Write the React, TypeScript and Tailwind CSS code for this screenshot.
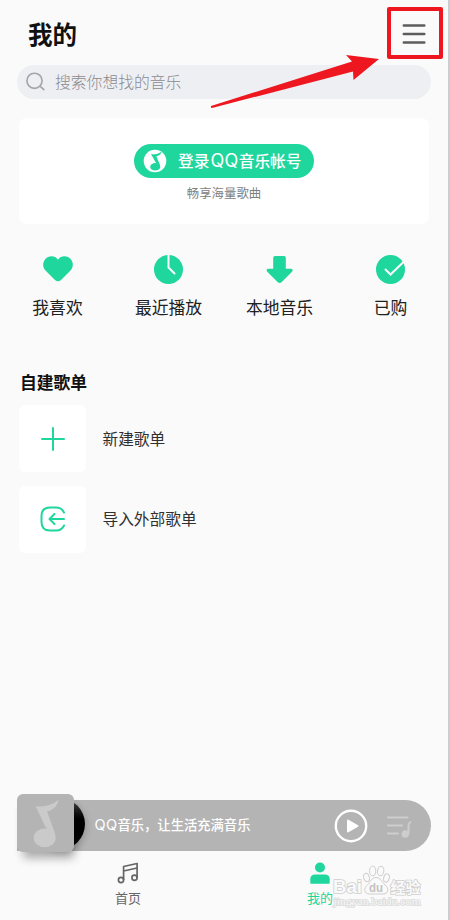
import type { ReactNode } from 'react'

// QQ Music note, drawn on a 57x58 grid
const Note = () => (
  <>
    <path d="M18.500 12c8 1.800 16-.8 23-6-1.300 6.500-5.500 10.300-11.500 11.500l8.300 22.500-4 1.500L28 32z" />
    <ellipse cx="27.700" cy="43.800" rx="11" ry="9.300" />
  </>
)

const Shortcut = ({ label, children }: { label: string; children: ReactNode }) => (
  <div className="flex w-[111px] flex-col items-center">
    <svg viewBox="0 0 32 32" className="h-8 w-8 text-[#1fd69d]">{children}</svg>
    <span className="mt-[10px] text-[16.8px] leading-6 text-[#202020] whitespace-nowrap">{label}</span>
  </div>
)

const PlaylistRow = ({ label, children }: { label: string; children: ReactNode }) => (
  <div className="flex h-[67px] items-center">
    <div className="flex h-[67px] w-[67px] items-center justify-center rounded-md bg-white">
      <svg viewBox="0 0 28 28" className="h-7 w-7" fill="none" stroke="#1fd69d" strokeWidth="2" strokeLinecap="round" strokeLinejoin="round">
        {children}
      </svg>
    </div>
    <span className="ml-[16.5px] text-[15.7px] leading-6 text-[#303030]">{label}</span>
  </div>
)

const Watermark = () => (
  <svg viewBox="0 0 100 52" className="absolute left-[330px] top-[863px] h-[52px] w-[100px] font-['Liberation_Sans',sans-serif]" fill="#fafafa" stroke="#cfcfcf" strokeWidth="1">
    <text x="3" y="30" fontSize="18.500" fontWeight="700" textLength="29" lengthAdjust="spacingAndGlyphs" strokeWidth="1.600" paintOrder="stroke">Bai</text>
    <ellipse cx="36.500" cy="14.500" rx="2.800" ry="4.200" transform="rotate(-15 36.500 14.500)" />
    <ellipse cx="42.700" cy="8" rx="3.100" ry="4.800" />
    <ellipse cx="50.700" cy="8" rx="3.100" ry="4.800" transform="rotate(8 50.700 8)" />
    <ellipse cx="56.500" cy="15" rx="2.800" ry="4.200" transform="rotate(15 56.500 15)" />
    <path d="M46 14.500c-4.500 0-5.500 4.500-8.500 7.500-4 3-4 9 2 9h13.500c6 0 6-6 2-9-3-3-4.500-7.500-9-7.500z" />
    <text x="39" y="28.500" fontSize="12" fontWeight="700" textLength="14" lengthAdjust="spacingAndGlyphs" fill="#c2c2c2" stroke="none">du</text>
    <text x="60.500" y="29.500" fontSize="15" fontWeight="700" textLength="30" strokeWidth="1.600" paintOrder="stroke" className="font-['Noto_Sans_CJK_SC',sans-serif]">经验</text>
    <text x="3.500" y="41.500" fontSize="10" textLength="87" lengthAdjust="spacingAndGlyphs" fill="#f6f6f6" stroke="#dcdcdc" strokeWidth="1.500" paintOrder="stroke" className="font-['Liberation_Serif',serif]">jingyan.baidu.com</text>
  </svg>
)

export default function App() {
  return (
    <div className="relative flex h-[920px] w-[450px] flex-col overflow-hidden border-r-2 border-[#cbcdd0] bg-[#fafafa] font-['Noto_Sans_CJK_SC',sans-serif]">
      <header className="flex h-[65px] items-center justify-between pl-7 pr-[22px]">
        <h1 className="mt-[3px] text-[24.5px] font-bold leading-9 text-[#111]">我的</h1>
        <svg viewBox="0 0 24 22" className="mt-[2px] h-[22px] w-6" stroke="#5c5c5c" strokeWidth="2.500" strokeLinecap="round">
          <path d="M1.800 2.500h20.500M1.800 11h20.500M1.800 19.500h20.500" />
        </svg>
      </header>

      <div className="mx-[17px] flex h-[34px] w-[414px] items-center rounded-full bg-[#eeeff3] pl-[9px]">
        <svg viewBox="0 0 20 20" className="h-5 w-5" fill="none" stroke="#a5a5a9" strokeWidth="1.600" strokeLinecap="round">
          <circle cx="8.500" cy="8.800" r="7.600" />
          <path d="M14 14.200l3.800 3.500" />
        </svg>
        <span className="ml-[9px] text-[15.8px] leading-6 text-[#8b8b8f] font-light">搜索你想找的音乐</span>
      </div>

      <section className="ml-[19px] mt-[19px] flex h-[106px] w-[410px] flex-col items-center rounded-lg bg-white pt-[26px]">
        <button className="flex h-[34px] w-[180px] items-center rounded-full bg-[#1fd69d] pl-[9px] text-white">
          <svg viewBox="0 0 24 24" className="h-6 w-6">
            <circle cx="12" cy="12" r="11.300" fill="white" />
            <g transform="translate(-.5 .3) scale(.46 .4)" fill="#1fd69d">
              <Note />
            </g>
          </svg>
          <span className="ml-[11px] whitespace-nowrap text-[15.7px] font-medium leading-6">
            登录<span className="ml-[1px] font-['Inter',sans-serif] text-[18px] font-normal tracking-[0.4px]">QQ</span>音乐帐号
          </span>
        </button>
        <p className="mt-[6px] text-[12.4px] leading-[18px] text-[#808080]">畅享海量歌曲</p>
      </section>

      <nav className="ml-[2px] mt-[29px] flex">
        <Shortcut label="我喜欢">
          <path d="M16 6.800C18.500 2.600 25.200 2.200 28.600 5.900c3.200 3.500 2.900 8.600-.6 12.100l-9 9c-2 1.800-4 1.800-6 0l-9-9C.5 14.500.2 9.400 3.400 5.900 6.800 2.200 13.500 2.600 16 6.800z" fill="currentColor" />
        </Shortcut>
        <Shortcut label="最近播放">
          <circle cx="15.500" cy="16.500" r="14.500" fill="currentColor" />
          <path d="M15.500 1v13.500l6 6" fill="none" stroke="#fafafa" strokeWidth="2" strokeLinecap="round" />
        </Shortcut>
        <Shortcut label="本地音乐">
          <path d="M11 3h9q1.800 0 1.800 1.800v11h5c2 0 2.500 1.700 1.200 2.900L17.500 29.200c-1.200 1.100-2.500 1.100-3.700 0L3.300 18.700c-1.300-1.200-.8-2.900 1.200-2.900h4.700v-11Q9.200 3 11 3z" fill="currentColor" />
        </Shortcut>
        <Shortcut label="已购">
          <circle cx="15.500" cy="16.500" r="14.500" fill="currentColor" />
          <path d="M10.500 16.500l5 5L28 9.500" fill="none" stroke="#fafafa" strokeWidth="2" strokeLinecap="round" />
        </Shortcut>
      </nav>

      <section className="ml-[19px] mt-[51px]">
        <h2 className="ml-px text-[16.8px] font-bold leading-6 text-[#111]">自建歌单</h2>
        <div className="mt-[11px] flex flex-col gap-[13.500px]">
          <PlaylistRow label="新建歌单">
            <path d="M14 3v22M3 14h22" />
          </PlaylistRow>
          <PlaylistRow label="导入外部歌单">
            <path d="M25 7.500C23.500 4.500 21 2.500 17.500 2.500H11Q2.500 2.500 2.500 11v6q0 8.500 8.500 8.500h6.500c3.500 0 6-2 7.500-5M25 14H11M15.500 9L10.500 14l5 5" />
          </PlaylistRow>
        </div>
      </section>

      <footer className="mt-auto h-[126px]">
        <div className="relative ml-[17px] mt-[6px] flex h-[51px] w-[414px] items-center rounded-l-md rounded-r-full bg-[#b4b4b4]">
          <div className="absolute -top-[2.5px] left-[15.5px] h-[52px] w-[52px] rounded-full bg-linear-to-b from-[#555] via-black to-[#111] shadow-[2px_3px_6px_rgba(0,0,0,0.15)]" />
          <div className="absolute -top-[6px] left-0 h-[58px] w-[57px] rounded-md bg-[#b4b4b4] shadow-[3px_9px_10px_-3px_rgba(0,0,0,0.32)]">
            <svg viewBox="0 0 57 58" className="h-[58px] w-[57px]" fill="#cacaca">
              <Note />
            </svg>
          </div>
          <span className="-mt-px ml-[77.5px] whitespace-nowrap text-[13.3px] font-medium leading-5 text-white">
            <span className="font-['Inter',sans-serif] text-[14.5px] font-normal tracking-[0.4px]">QQ</span>音乐，让生活充满音乐
          </span>
          <svg viewBox="0 0 34 34" className="absolute left-[317px] top-[8.5px] h-[34px] w-[34px]">
            <circle cx="17" cy="17" r="15.200" fill="none" stroke="white" strokeWidth="2.400" />
            <path d="M14 11.500v11L23.500 17z" fill="white" stroke="white" strokeWidth="2" strokeLinejoin="round" />
          </svg>
          <svg viewBox="0 0 26 24" className="absolute left-[369px] top-[14px] h-6 w-[26px]" stroke="#cdcdcd" strokeWidth="2" fill="none" strokeLinecap="round">
            <path d="M2 3.500h19.500M2 11.500h14M2 19.500h10" />
            <circle cx="19.300" cy="20" r="2.800" fill="#cdcdcd" />
            <path d="M22.500 19.500V11.500q0-2 2-3.500" />
          </svg>
        </div>
        <div className="ml-8 flex">
          <div className="flex w-48 flex-col items-center pt-[11px] text-[#666]">
            <svg viewBox="0 0 22 22" className="h-[22px] w-[22px]" fill="none" stroke="currentColor" strokeWidth="1.700">
              <circle cx="4" cy="18" r="2.600" />
              <circle cx="17.500" cy="15.700" r="2.600" />
              <path d="M6.600 18V4.500L20.100 1.500v14.200M6.600 9l13.500-3" strokeLinejoin="round" />
            </svg>
            <span className="mt-[4px] text-[13px] leading-5">首页</span>
          </div>
          <div className="flex w-48 flex-col items-center pt-[11px] text-[#1fd69d]">
            <svg viewBox="0 0 22 22" className="h-[22px] w-[22px]" fill="currentColor">
              <circle cx="11" cy="5.500" r="5" />
              <path d="M1.300 21v-4q0-4.500 5-4.500h9.400q5 0 5 4.500v4q0 .8-.8.800H2.100q-.8 0-.8-.8z" />
            </svg>
            <span className="mt-[4px] text-[13px] leading-5">我的</span>
          </div>
        </div>
      </footer>

      <Watermark />

      {/* callout over the menu button */}
      <div className="absolute left-[387px] top-[7px] h-[52px] w-14 rounded-xs border-4 border-[#ee1720]" />
      <svg viewBox="0 0 170 60" className="absolute left-[210px] top-[52px] h-[60px] w-[170px]" fill="#ee1720">
        <path d="M1 54L142 9.500 136 3l33 4-25.500 21-.5-8.500L2 56q-1.500 0-1-2z" />
      </svg>
    </div>
  )
}
